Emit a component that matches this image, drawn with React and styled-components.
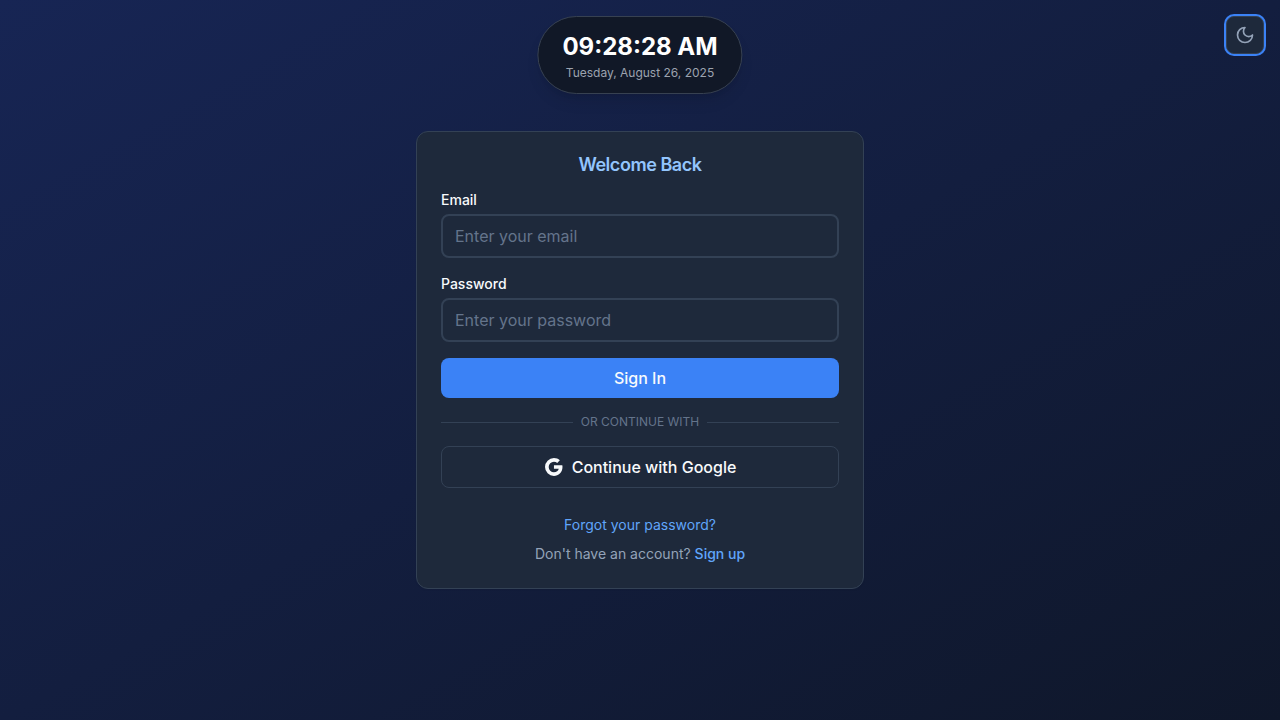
import React from "react";
import styled, { createGlobalStyle } from "styled-components";

const GlobalStyle = createGlobalStyle`
  *, *::before, *::after { box-sizing: border-box; }
  body {
    margin: 0;
    font-family: Inter, "Liberation Sans", sans-serif;
    font-size: 16px;
    line-height: 24px;
    color: #f8fafc;
  }
  button, input { font: inherit; color: inherit; }
  h1, p { margin: 0; }
`;

const Page = styled.div`
  position: relative;
  display: flex;
  align-items: center;
  justify-content: center;
  min-height: 100vh;
  padding: 16px;
  background: linear-gradient(to bottom right, #172554, #0f172a);
`;

const Clock = styled.div`
  position: absolute;
  top: 16px;
  left: 50%;
  transform: translateX(-50%);
  display: flex;
  flex-direction: column;
  align-items: center;
  padding: 12px 24px;
  border: 1px solid #374151;
  border-radius: 9999px;
  background: #111827;
  box-shadow: 0 10px 15px -3px rgba(0, 0, 0, 0.1), 0 4px 6px -4px rgba(0, 0, 0, 0.1);
  white-space: nowrap;
`;

const Time = styled.div`
  font-size: 24px;
  line-height: 36px;
  font-weight: 700;
  color: #ffffff;
`;

const DateText = styled.div`
  font-size: 12px;
  line-height: 16px;
  color: #9ca3af;
`;

const ThemeToggle = styled.button`
  position: absolute;
  top: 16px;
  right: 16px;
  display: flex;
  align-items: center;
  justify-content: center;
  width: 38px;
  height: 38px;
  padding: 0;
  border: 1px solid #334155;
  border-radius: 8px;
  background: #1e293b;
  color: #94a3b8;
  box-shadow: 0 0 0 2px #3b82f6;
  cursor: pointer;
`;

const Card = styled.main`
  width: 100%;
  max-width: 448px;
  padding: 24px;
  border: 1px solid #334155;
  border-radius: 12px;
  background: #1e293b;
  box-shadow: 0 1px 2px rgba(0, 0, 0, 0.05);
`;

const Title = styled.h1`
  margin-bottom: 16px;
  font-size: 18px;
  line-height: 18px;
  font-weight: 600;
  letter-spacing: -0.025em;
  text-align: center;
  color: #93c5fd;
`;

const Form = styled.form`
  display: flex;
  flex-direction: column;
  gap: 16px;
`;

const Field = styled.div`
  display: flex;
  flex-direction: column;
  gap: 4px;
`;

const Label = styled.label`
  font-size: 14px;
  line-height: 20px;
  font-weight: 500;
`;

const Input = styled.input`
  width: 100%;
  height: 44px;
  padding: 8px 12px;
  border: 2px solid #334155;
  border-radius: 8px;
  background: transparent;
  outline: none;
  &::placeholder { color: #64748b; opacity: 1; }
  &:focus { border-color: #3b82f6; }
`;

const Button = styled.button`
  display: flex;
  align-items: center;
  justify-content: center;
  gap: 8px;
  width: 100%;
  padding: 8px 16px;
  border: ${(p) => (p.$outline ? "1px solid #334155" : "none")};
  border-radius: 8px;
  background: ${(p) => (p.$outline ? "transparent" : "#3b82f6")};
  font-weight: 500;
  cursor: pointer;
`;

const Divider = styled.div`
  display: flex;
  align-items: center;
  gap: 8px;
  font-size: 12px;
  line-height: 16px;
  text-transform: uppercase;
  color: #64748b;
  &::before, &::after {
    content: "";
    flex: 1;
    height: 1px;
    background: #334155;
  }
`;

const Footer = styled.div`
  display: flex;
  flex-direction: column;
  gap: 8px;
  margin-top: 24px;
  text-align: center;
`;

const SignUpText = styled.p`
  font-size: 14px;
  line-height: 20px;
  color: #94a3b8;
`;

const Link = styled.a`
  font-size: 14px;
  line-height: 20px;
  font-weight: ${(p) => (p.$strong ? 500 : 400)};
  color: #60a5fa;
  text-decoration: none;
  &:hover { text-decoration: underline; }
`;

const MoonIcon = () => (
  <svg width="20" height="20" viewBox="0 0 24 24" fill="none" stroke="currentColor" strokeWidth="2" strokeLinecap="round" strokeLinejoin="round" aria-hidden="true">
    <path d="M12 3a6 6 0 0 0 9 9 9 9 0 1 1-9-9Z" />
  </svg>
);

const GoogleIcon = () => (
  <svg width="20" height="20" viewBox="2 2 20 20" fill="currentColor" aria-hidden="true">
    <path d="M20.283 10.356h-8.327v3.451h4.792c-.446 2.193-2.313 3.453-4.792 3.453a5.27 5.27 0 0 1-5.279-5.28 5.27 5.27 0 0 1 5.279-5.279c1.259 0 2.397.447 3.29 1.178l2.6-2.599c-1.584-1.381-3.615-2.233-5.89-2.233a8.908 8.908 0 0 0-8.934 8.934 8.907 8.907 0 0 0 8.934 8.934c4.467 0 8.529-3.249 8.529-8.934 0-.528-.081-1.097-.202-1.625z" />
  </svg>
);

export default function App() {
  return (
    <>
      <GlobalStyle />
      <Page>
        <Clock>
          <Time>09:28:28 AM</Time>
          <DateText>Tuesday, August 26, 2025</DateText>
        </Clock>
        <ThemeToggle type="button" aria-label="Toggle theme">
          <MoonIcon />
        </ThemeToggle>
        <Card>
          <Title>Welcome Back</Title>
          <Form onSubmit={(e) => e.preventDefault()}>
            <Field>
              <Label htmlFor="email">Email</Label>
              <Input id="email" type="email" placeholder="Enter your email" />
            </Field>
            <Field>
              <Label htmlFor="password">Password</Label>
              <Input id="password" type="password" placeholder="Enter your password" />
            </Field>
            <Button type="submit">Sign In</Button>
            <Divider>Or continue with</Divider>
            <Button type="button" $outline>
              <GoogleIcon />
              Continue with Google
            </Button>
          </Form>
          <Footer>
            <div>
              <Link href="#forgot">Forgot your password?</Link>
            </div>
            <SignUpText>
              Don't have an account? <Link href="#signup" $strong>Sign up</Link>
            </SignUpText>
          </Footer>
        </Card>
      </Page>
    </>
  );
}
